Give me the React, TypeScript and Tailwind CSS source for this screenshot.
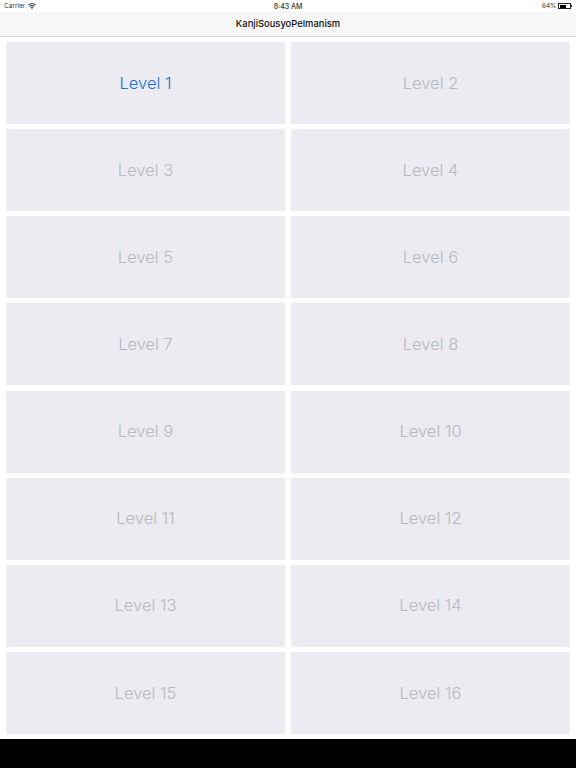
const LEVELS = Array.from({ length: 16 }, (_, i) => i + 1);

function WifiIcon() {
  return (
    <svg width="8" height="6" viewBox="0 0 18 14" className="fill-[#222]">
      <path d="M9 14 6 10.6a4.6 4.6 0 0 1 6 0L9 14Z" />
      <path d="M4.6 9 3 7.2a9 9 0 0 1 12 0L13.4 9a6.6 6.6 0 0 0-8.8 0Z" />
      <path d="M1.6 5.6 0 3.8a13.4 13.4 0 0 1 18 0l-1.6 1.8a11 11 0 0 0-14.8 0Z" />
    </svg>
  );
}

function BatteryIcon() {
  return (
    <div className="flex items-center">
      <div className="h-[6px] w-[13px] border-[0.5px] border-[#222] p-[0.5px]">
        <div className="h-full w-[64%] bg-black" />
      </div>
      <div className="h-[2px] w-[1px] bg-[#222]" />
    </div>
  );
}

export default function App() {
  return (
    <div className="flex h-[768px] w-[576px] flex-col overflow-hidden bg-white font-['Inter',sans-serif]">
      {/* status bar */}
      <div className="relative flex h-3 shrink-0 items-center justify-between pl-1 pr-[4px] text-[6.5px] leading-none text-[#333]">
        <div className="flex items-center gap-[3px]">
          <span>Carrier</span>
          <WifiIcon />
        </div>
        <span className="absolute left-0 right-0 text-center text-[7px] font-medium">8:43 AM</span>
        <div className="flex items-center gap-[1.5px]">
          <span>64%</span>
          <BatteryIcon />
        </div>
      </div>

      {/* nav bar */}
      <div className="flex h-[25px] shrink-0 items-center justify-center border-b border-[#d6d6d6] bg-[#f7f7f7] text-[9.4px] font-medium text-[#111]">
        KanjiSousyoPelmanism
      </div>

      {/* level buttons */}
      <div className="grid h-[692px] shrink-0 grid-cols-2 grid-rows-8 gap-x-[6px] gap-y-[5.2px] px-[6px] pt-[5px] box-content">
        {LEVELS.map((n) => (
          <div
            key={n}
            className={`flex items-center justify-center bg-[#ebebf1] text-[16.5px] font-light ${
              n === 1 ? "text-[#1c6ee0]" : "text-[#b8b8be]"
            }`}
          >
            Level {n}
          </div>
        ))}
      </div>

      <div className="mt-[5px] flex-1 bg-black" />
    </div>
  );
}
